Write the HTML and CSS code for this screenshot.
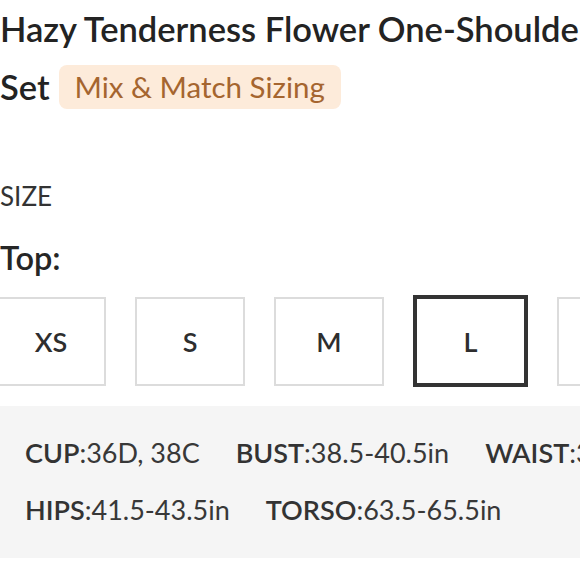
FILE: index.html
```html
<!DOCTYPE html>
<html lang="en">
<head>
<meta charset="utf-8">
<title>Hazy Tenderness Flower One-Shoulder Set</title>
<link rel="stylesheet" href="styles.css">
</head>
<body>
<div class="page">
  <h1 class="title">
    <span class="title-line">Hazy Tenderness Flower One-Shoulder Bikini</span>
    <span class="title-row"><span>Set</span><span class="badge">Mix &amp; Match Sizing</span></span>
  </h1>
  <div class="size-label">SIZE</div>
  <div class="part-label">Top:</div>
  <div class="sizes">
    <div class="size">XS</div>
    <div class="size">S</div>
    <div class="size">M</div>
    <div class="size selected">L</div>
    <div class="size">XL</div>
  </div>
  <div class="measure">
    <div class="measure-row">
      <span class="item"><b>CUP</b>:36D, 38C</span>
      <span class="item"><b>BUST</b>:38.5-40.5in</span>
      <span class="item"><b>WAIST</b>:31-33in</span>
    </div>
    <div class="measure-row">
      <span class="item"><b>HIPS</b>:41.5-43.5in</span>
      <span class="item"><b>TORSO</b>:63.5-65.5in</span>
    </div>
  </div>
</div>
</body>
</html>
```
FILE: styles.css
```css
html, body {
  margin: 0;
  padding: 0;
  background: #ffffff;
  overflow: hidden;
}
body {
  font-family: Lato, "Open Sans", "Liberation Sans", sans-serif;
  color: #2b2b2b;
}
.page {
  width: 580px;
  overflow: hidden;
}
.title {
  margin: 0;
  font-size: 34.5px;
  font-weight: 600;
  color: #232323;
}
.title-line {
  display: block;
  white-space: nowrap;
  line-height: 58px;
}
.title-row {
  display: flex;
  align-items: center;
  gap: 9px;
  height: 58px;
  line-height: 58px;
}
.badge {
  display: inline-flex;
  align-items: center;
  height: 44px;
  padding: 0 16px;
  border-radius: 8px;
  background: #fdebda;
  color: #a5652f;
  font-size: 29.5px;
  font-weight: 400;
  line-height: 44px;
  white-space: nowrap;
}
.size-label {
  margin-top: 60px;
  font-size: 26px;
  line-height: 40px;
  color: #333333;
}
.part-label {
  margin-top: 22px;
  font-size: 32.5px;
  font-weight: 600;
  line-height: 40px;
  color: #262626;
}
.sizes {
  display: flex;
  align-items: center;
  gap: 29px;
  margin-top: 17px;
  margin-left: -4px;
}
.size {
  flex: 0 0 auto;
  box-sizing: border-box;
  width: 110px;
  height: 89px;
  border: 2px solid #dcdcdc;
  display: flex;
  align-items: center;
  justify-content: center;
  font-size: 27px;
  font-weight: 600;
  color: #2e2e2e;
}
.size.selected {
  width: 115px;
  height: 92px;
  border: 4px solid #333333;
}
.measure {
  margin-top: 19px;
  background: #f5f5f5;
  padding: 18px 0 20px 25px;
}
.measure-row {
  display: flex;
  gap: 36px;
  white-space: nowrap;
  font-size: 27px;
  line-height: 57px;
  color: #383838;
}
.item b {
  font-weight: 600;
  color: #333333;
}
```
